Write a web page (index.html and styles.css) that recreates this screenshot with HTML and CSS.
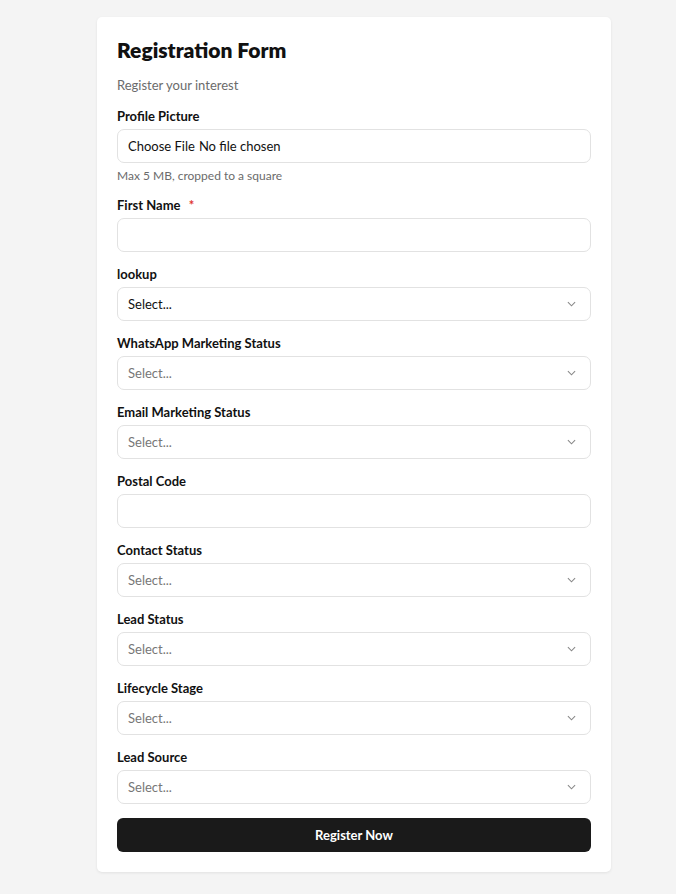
FILE: index.html
```html
<!DOCTYPE html>
<html lang="en">
<head>
    <meta charset="UTF-8">
    <meta name="viewport" content="width=device-width, initial-scale=1.0">
    <title>Registration Form</title>
    <link rel="stylesheet" href="styles.css">
</head>
<body>
    <div class="card">
        <h1>Registration Form</h1>
        <p class="subtitle">Register your interest</p>

        <form class="form">
            <!-- Profile picture -->
            <div class="field">
                <label for="picture">Profile Picture</label>
                <input type="file" id="picture" class="control file">
                <span class="hint">Max 5 MB, cropped to a square</span>
            </div>

            <div class="field">
                <label for="firstName">First Name <span class="req">*</span></label>
                <input type="text" id="firstName" class="control">
            </div>

            <div class="field">
                <label>lookup</label>
                <div class="control select dark">Select...<svg viewBox="0 0 10 6"><path d="M1 1l4 4 4-4"/></svg></div>
            </div>

            <div class="field">
                <label>WhatsApp Marketing Status</label>
                <div class="control select">Select...<svg viewBox="0 0 10 6"><path d="M1 1l4 4 4-4"/></svg></div>
            </div>

            <div class="field">
                <label>Email Marketing Status</label>
                <div class="control select">Select...<svg viewBox="0 0 10 6"><path d="M1 1l4 4 4-4"/></svg></div>
            </div>

            <div class="field">
                <label for="postal">Postal Code</label>
                <input type="text" id="postal" class="control">
            </div>

            <div class="field">
                <label>Contact Status</label>
                <div class="control select">Select...<svg viewBox="0 0 10 6"><path d="M1 1l4 4 4-4"/></svg></div>
            </div>

            <div class="field">
                <label>Lead Status</label>
                <div class="control select">Select...<svg viewBox="0 0 10 6"><path d="M1 1l4 4 4-4"/></svg></div>
            </div>

            <div class="field">
                <label>Lifecycle Stage</label>
                <div class="control select">Select...<svg viewBox="0 0 10 6"><path d="M1 1l4 4 4-4"/></svg></div>
            </div>

            <div class="field">
                <label>Lead Source</label>
                <div class="control select">Select...<svg viewBox="0 0 10 6"><path d="M1 1l4 4 4-4"/></svg></div>
            </div>

            <button type="submit">Register Now</button>
        </form>
    </div>
</body>
</html>
```

FILE: styles.css
```css
/* Page */
body {
    font-family: Lato, "Liberation Sans", sans-serif;
    margin: 0;
    padding: 17px 0 22px;
    background-color: #f4f4f4;
    color: #111;
}
.card {
    width: 474px;
    margin: 0 0 0 97px;
    padding: 20px 20px 20px;
    background-color: #fff;
    border-radius: 5px;
    box-shadow: 0 1px 3px rgba(0, 0, 0, 0.08);
}
h1 {
    margin: 1px 0 0;
    font-size: 21px;
    line-height: 24px;
    font-weight: 800;
}
.subtitle {
    margin: 14px 0 0;
    font-size: 13px;
    line-height: 18px;
    color: #6b6b6b;
}

/* Fields */
.form {
    margin-top: 14px;
    display: flex;
    flex-direction: column;
    gap: 14px;
}
.field {
    display: flex;
    flex-direction: column;
}
label {
    font-size: 13px;
    line-height: 16px;
    font-weight: 700;
    margin-bottom: 5px;
}
.req {
    color: #e0342f;
    margin-left: 5px;
}
.control {
    box-sizing: border-box;
    width: 100%;
    height: 34px;
    margin: 0;
    padding: 0 10px;
    font-family: inherit;
    font-size: 13px;
    border: 1px solid #e2e2e2;
    border-radius: 7px;
    background: #fff;
}
.file {
    padding-top: 8px;
    color: #111;
}
.file::file-selector-button {
    font-family: inherit;
    font-size: 13px;
    border: none;
    background: none;
    padding: 0;
    margin-right: 4px;
    color: #111;
}
.hint {
    margin-top: 6px;
    font-size: 12px;
    line-height: 14px;
    color: #6b6b6b;
}
.select {
    display: flex;
    align-items: center;
    justify-content: space-between;
    color: #777;
}
.select.dark {
    color: #111;
}
.select svg {
    width: 9px;
    height: 6px;
    margin-right: 4px;
    fill: none;
    stroke: #888;
    stroke-width: 1.2;
}
button {
    height: 34px;
    border: none;
    border-radius: 6px;
    background-color: #1a1a1a;
    color: #fff;
    font-family: inherit;
    font-size: 13px;
    font-weight: 700;
    cursor: pointer;
}
```
